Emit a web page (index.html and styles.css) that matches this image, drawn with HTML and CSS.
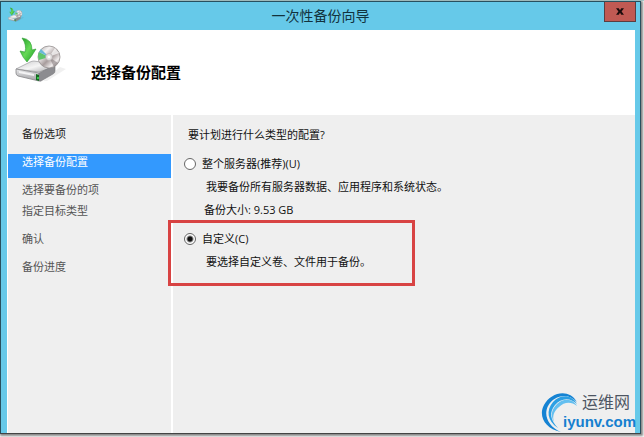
FILE: index.html
```
<!DOCTYPE html>
<html lang="zh-CN">
<head>
<meta charset="utf-8">
<title>一次性备份向导</title>
<link rel="stylesheet" href="styles.css">
</head>
<body>
<svg class="defs" aria-hidden="true">
  <defs>
    <linearGradient id="arrow" x1="0" y1="0" x2="1" y2="1"><stop offset="0" stop-color="#1c9a25"/><stop offset=".5" stop-color="#66d957"/><stop offset="1" stop-color="#189a20"/></linearGradient>
    <linearGradient id="top" x1="0" y1="0" x2="1" y2="1"><stop offset="0" stop-color="#c9c9cb"/><stop offset=".5" stop-color="#f5f5f5"/><stop offset="1" stop-color="#a5a5a8"/></linearGradient>
    <linearGradient id="front" x1="0" y1="0" x2="0" y2="1"><stop offset="0" stop-color="#e8e8ea"/><stop offset="1" stop-color="#a0a0a3"/></linearGradient>
    <linearGradient id="disc" x1="0" y1="0" x2="1" y2="1"><stop offset="0" stop-color="#a9a4a5"/><stop offset=".3" stop-color="#f4f2f2"/><stop offset=".55" stop-color="#a79c9c"/><stop offset=".75" stop-color="#eeeaea"/><stop offset="1" stop-color="#8a8585"/></linearGradient>
    <symbol id="backup" viewBox="0 0 54 48">
      <path d="M28 44l17-14 6 2-19 12z" fill="#000" opacity=".06"/>
      <path d="M1 32L15 25Q17 24 19 24L38 27Q41 28 39 30L24 35z" fill="url(#top)" stroke="#8b8b8e" stroke-width=".6"/>
      <path d="M1 32L24 36V44L3 39Q1 38 1 36z" fill="url(#front)" stroke="#858588" stroke-width=".8"/>
      <path d="M24 36L40 28V34Q40 36 38 37L26 44Q24 45 24 43z" fill="#8c8c90" stroke="#77777a" stroke-width=".6"/>
      <path d="M4 34L19 37V39L4 36z" fill="#f3f3f4"/>
      <path d="M21 37l3 1v6l-3-1z" fill="#126b20"/><circle cx="23" cy="41" r="1" fill="#4be35b"/>
      <circle cx="34" cy="20" r="11" fill="url(#disc)" stroke="#948f8f" stroke-width=".8"/>
      <path d="M34 20L24 15Q22 19 24 23z" fill="#5ec66a"/>
      <path d="M34 20L26 12 24 15z" fill="#6ab9d8"/>
      <path d="M34 20L40 11 44 16z" fill="#fff" opacity=".7"/>
      <path d="M34 20L39 30 43 26z" fill="#776d70" opacity=".5"/>
      <circle cx="34" cy="20" r="3.4" fill="#e5e2e2" stroke="#aaa4a4" stroke-width=".6"/><circle cx="34" cy="20" r="1.3" fill="#fff"/>
      <path d="M7 1Q17 2 17 13L21 12Q17 19 12 25 8 21 5 14L10 15Q12 8 7 1z" fill="url(#arrow)" stroke="#2a9c30" stroke-width=".6"/>
    </symbol>
  </defs>
</svg>
<div class="window">
  <header class="titlebar">
    <svg class="app-icon" aria-hidden="true"><use href="#backup"/></svg>
    <h1 class="caption">一次性备份向导</h1>
    <button class="close" type="button" aria-label="关闭"><svg viewBox="0 0 10 8" aria-hidden="true"><path d="M0 0h3.4L5 2.4 6.6 0H10L7 4l3 4H6.6L5 5.6 3.4 8H0l3-4z"/></svg></button>
  </header>
  <div class="client">
    <div class="banner">
      <svg class="banner-icon" aria-hidden="true"><use href="#backup"/></svg>
      <h2 class="heading">选择备份配置</h2>
    </div>
    <div class="columns">
      <nav class="steps">
        <a class="step done" href="#options">备份选项</a>
        <a class="step current" href="#config" aria-current="step">选择备份配置</a>
        <a class="step" href="#items">选择要备份的项</a>
        <a class="step sub" href="#target">指定目标类型</a>
        <a class="step" href="#confirm">确认</a>
        <a class="step" href="#progress">备份进度</a>
      </nav>
      <main class="content">
        <form>
          <p class="question">要计划进行什么类型的配置?</p>
          <div class="option">
            <label class="choice"><input type="radio" name="config" value="full">整个服务器(推荐)(U)</label>
            <p class="detail">我要备份所有服务器数据、应用程序和系统状态。</p>
            <p class="detail size">备份大小: 9.53 GB</p>
          </div>
          <div class="option marked">
            <label class="choice"><input type="radio" name="config" value="custom" checked>自定义(C)</label>
            <p class="detail">要选择自定义卷、文件用于备份。</p>
          </div>
        </form>
      </main>
    </div>
  </div>
</div>
<div class="watermark">
  <svg class="swirl" viewBox="0 0 40 42" aria-hidden="true">
    <path d="M20 41C4 38-3 25 3 14 10 1 28-3 36 11 27 1 13 4 7 15 2 25 8 36 20 41z" fill="#1583d3"/>
    <path d="M17 37C6 30 5 19 12 11 19 3 31 3 36 13 29 6 20 7 14 14 8 21 9 29 17 37z" fill="#2b9fe4"/>
    <path d="M13 31C9 24 11 18 16 13 22 7 32 7 36 15 30 10 23 11 18 16 13 20 11 25 13 31z" fill="#63bff0"/>
  </svg>
  <span class="site">运维网</span>
  <span class="domain">iyunv.com</span>
</div>
</body>
</html>
```
FILE: styles.css
```
* { box-sizing: border-box; }

body {
  margin: 0;
  height: 100vh;
  padding: 1px 3px 3px 0;
  display: flex;
  background: linear-gradient(#a9d0d2 1px, #fff 1px);
  color: #111;
  font: 11px/16px "Open Sans", "Noto Sans CJK SC", sans-serif;
  overflow: hidden;
}

h1, h2, p { margin: 0; }

.defs { position: absolute; width: 0; height: 0; }

.window {
  flex: 1;
  display: flex;
  flex-direction: column;
  border: 1px solid #28505f;
  border-bottom-color: #444;
  background: #66c9e9;
  box-shadow: 1px 1px 2px 1px #888;
}

.titlebar {
  flex: none;
  display: grid;
  grid-template-columns: 40px 1fr 40px;
  height: 28px;
}

.app-icon { width: 17px; height: 16px; margin: 5px 0 0 7px; }

.caption {
  font-size: 14px;
  font-weight: 400;
  line-height: 27px;
  text-align: center;
  color: #12323d;
}

.close {
  justify-self: end;
  width: 32px;
  height: 20px;
  margin-right: 4px;
  padding: 0;
  border: 1px solid #5c3d40;
  border-top: 0;
  background: #c05a53;
}

.close svg { display: block; width: 8px; height: 7px; margin: auto; fill: #1b0c0c; }

.client {
  flex: 1;
  display: flex;
  flex-direction: column;
  margin: 0 5px 0 6px;
  border-left: 1px solid #fff;
  background: #fff;
}

.banner { display: flex; height: 85px; padding: 7px; }

.banner-icon { width: 54px; height: 48px; }

.heading { margin-left: 22px; font-size: 15px; font-weight: 700; line-height: 70px; color: #000; }

.columns {
  flex: 1;
  display: grid;
  grid-template-columns: 163px 1fr;
  column-gap: 2px;
}

.steps, .content { background: #efefef; }

.steps { display: flex; flex-direction: column; gap: 12px; padding-top: 11px; }

.step { padding-left: 14px; color: #555; text-decoration: none; }

.done { color: #222; }

.current {
  margin-bottom: -8px;
  padding-bottom: 8px;
  background: #3399fe;
  color: #fff;
}

.sub { margin-top: -7px; }

.content { padding: 12px 11px; }

.question { padding-left: 4px; }

.option { margin-top: 13px; }

.choice { display: flex; align-items: center; gap: 6px; }

.choice input {
  appearance: none;
  flex: none;
  width: 12px;
  height: 12px;
  margin: 0;
  border: 1px solid #666;
  border-radius: 50%;
  background: #fff;
}

.choice input:checked { background: radial-gradient(circle, #111 2px, #fff 4px); }

.detail { margin-top: 7px; padding-left: 22px; }

.size { padding-left: 20px; }

.marked { position: relative; width: 231px; }

.marked::after {
  content: "";
  position: absolute;
  inset: -11px 0 -16px -16px;
  border: 3px solid #d84343;
  pointer-events: none;
}

.watermark {
  position: absolute;
  right: 5px;
  bottom: 6px;
  display: grid;
  grid-template-columns: 22px 76px;
  grid-template-rows: 20px 18px;
}

.swirl { grid-area: 1 / 1 / 3 / 3; width: 40px; height: 42px; margin-top: -2px; }

.site { grid-area: 1 / 2; padding-left: 19px; font-size: 16px; line-height: 18px; color: #4d5562; }

.domain { grid-area: 2 / 2; font: 700 15px/18px "Liberation Sans", sans-serif; color: #1580cf; }
```
